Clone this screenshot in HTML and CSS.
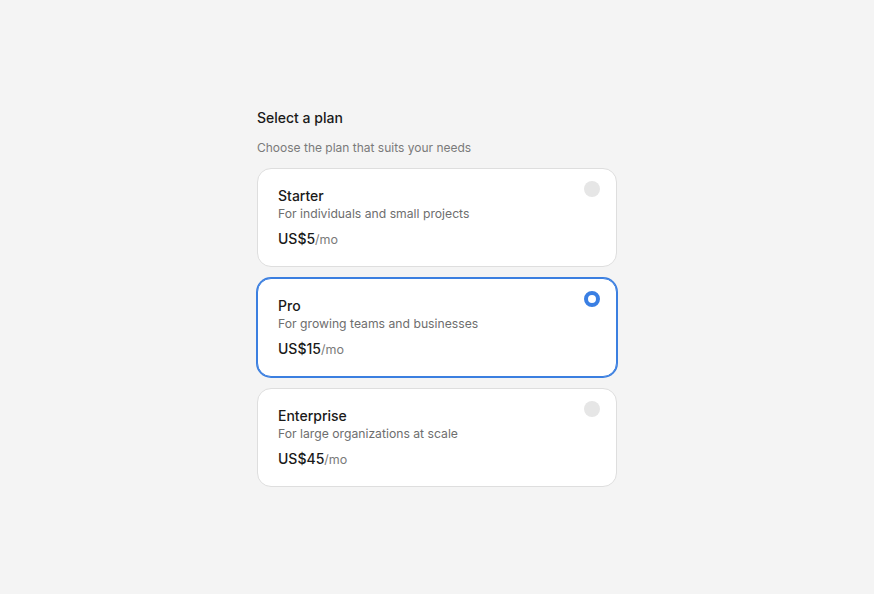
FILE: index.html
```html
<!DOCTYPE html>
<html lang="en">
<head>
<meta charset="utf-8">
<title>Select a plan</title>
<link rel="stylesheet" href="styles.css">
</head>
<body>
<main class="page">
  <section class="picker">
    <h1 class="title">Select a plan</h1>
    <p class="subtitle">Choose the plan that suits your needs</p>
    <div class="plans">
      <label class="plan">
        <div class="plan-body">
          <div class="plan-name">Starter</div>
          <div class="plan-desc">For individuals and small projects</div>
          <div class="plan-price">US$5<span class="per">/mo</span></div>
        </div>
        <span class="radio"></span>
      </label>
      <label class="plan selected">
        <div class="plan-body">
          <div class="plan-name">Pro</div>
          <div class="plan-desc">For growing teams and businesses</div>
          <div class="plan-price">US$15<span class="per">/mo</span></div>
        </div>
        <span class="radio checked"></span>
      </label>
      <label class="plan">
        <div class="plan-body">
          <div class="plan-name">Enterprise</div>
          <div class="plan-desc">For large organizations at scale</div>
          <div class="plan-price">US$45<span class="per">/mo</span></div>
        </div>
        <span class="radio"></span>
      </label>
    </div>
  </section>
</main>
</body>
</html>
```

FILE: styles.css
```css
* { box-sizing: border-box; }
html, body { margin: 0; padding: 0; }
body {
  background: #f4f4f4;
  font-family: Inter, "Noto Sans", "Liberation Sans", sans-serif;
  color: #1c1c1c;
}
.page {
  min-height: 594px;
  display: flex;
  align-items: center;
  justify-content: center;
}
.picker {
  width: 360px;
  display: flex;
  flex-direction: column;
}
.title {
  margin: 0;
  font-size: 14px;
  line-height: 20px;
  font-weight: 500;
  color: #1a1a1a;
}
.subtitle {
  margin: 12px 0 0;
  font-size: 12px;
  line-height: 16px;
  color: #7a7a7a;
}
.plans {
  margin-top: 12px;
  display: flex;
  flex-direction: column;
  gap: 11px;
}
.plan {
  display: flex;
  justify-content: space-between;
  align-items: flex-start;
  background: #fff;
  border: 1px solid #dedede;
  border-radius: 14px;
  padding: 17px 16px 16px 20px;
  cursor: pointer;
}
.plan.selected {
  border-color: #3b7fe0;
  box-shadow: 0 0 0 1px #3b7fe0;
}
.plan-name {
  font-size: 14px;
  line-height: 20px;
  font-weight: 500;
  color: #1a1a1a;
}
.plan-desc {
  font-size: 12.2px;
  line-height: 16px;
  color: #6e6e6e;
}
.plan-price {
  margin-top: 7px;
  font-size: 14px;
  line-height: 20px;
  font-weight: 500;
  color: #1a1a1a;
}
.per {
  font-size: 12.5px;
  font-weight: 400;
  color: #7a7a7a;
}
.radio {
  width: 16px;
  height: 16px;
  border-radius: 50%;
  background: #e6e6e6;
  margin-top: -5px;
  flex: none;
}
.radio.checked {
  background: #fff;
  border: 4.5px solid #3a7fe3;
}
```
